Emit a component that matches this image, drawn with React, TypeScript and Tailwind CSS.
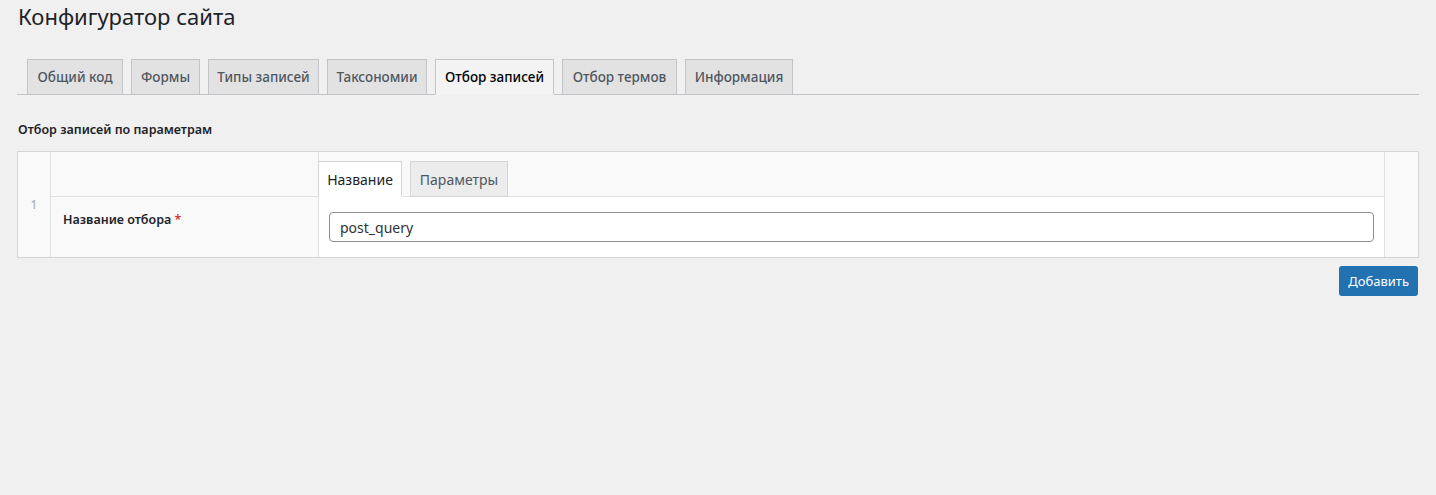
import { useState } from 'react';

const tabs = [
    { label: 'Общий код', w: 'w-[96px]' },
    { label: 'Формы', w: 'w-[69px]' },
    { label: 'Типы записей', w: 'w-[111px]' },
    { label: 'Таксономии', w: 'w-[100px]' },
    { label: 'Отбор записей', w: 'w-[119px]' },
    { label: 'Отбор термов', w: 'w-[115px]' },
    { label: 'Информация', w: 'w-[108px]' },
];

const fieldTabs = [
    { label: 'Название', w: 'w-[84px]' },
    { label: 'Параметры', w: 'w-[98px]' },
];

export default function App() {
    const [activeTab, setActiveTab] = useState(4);
    const [fieldTab, setFieldTab] = useState(0);
    const [name, setName] = useState('post_query');

    return (
        <div className="min-h-[495px] bg-[#f0f0f1] text-[#1d2327] font-['Segoe_UI','Noto_Sans','Open_Sans',sans-serif]">
            <div className="pl-[17px] pr-[17px]">
                <h1 className="pt-[2px] pl-[1px] text-[22px] leading-[29px] font-normal text-[#1d2327]">Конфигуратор сайта</h1>

                {/* Main tabs */}
                <nav className="mt-[28px] flex items-end gap-[8px] pl-[10px] border-b border-[#c3c4c7]">
                    {tabs.map((t, i) => (
                        <button
                            key={t.label}
                            onClick={() => setActiveTab(i)}
                            className={`${t.w} h-[36px] -mb-px flex items-center justify-center border border-[#c3c4c7] text-[13.5px] font-medium whitespace-nowrap ${
                                i === activeTab
                                    ? 'bg-[#f3f3f4] text-[#000000] border-b-[#f3f3f4]'
                                    : 'bg-[#e2e2e3] text-[#50575e]'
                            }`}
                        >
                            {t.label}
                        </button>
                    ))}
                </nav>

                <h2 className="mt-[26px] pl-[1px] text-[12.5px] leading-[18px] font-semibold text-[#1d2327]">Отбор записей по параметрам</h2>

                {/* Repeater table */}
                <div className="mt-[12px] grid grid-cols-[33px_268px_1fr_33px] border border-[#d5d5d7] bg-white">
                    <div className="row-span-2 bg-[#f9f9f9] border-r border-[#e1e1e1] flex items-center justify-center text-[12px] text-[#a0a5aa]">1</div>

                    <div className="h-[45px] bg-[#f9f9f9] border-r border-b border-[#e1e1e1]"></div>
                    <div className="h-[45px] bg-[#f9f9f9] border-r border-b border-[#e1e1e1] flex items-end gap-[8px] pt-[10px]">
                        {fieldTabs.map((t, i) => (
                            <button
                                key={t.label}
                                onClick={() => setFieldTab(i)}
                                className={`${t.w} h-[36px] -mb-px flex items-center justify-center border border-[#d5d5d7] text-[14px] font-normal ${
                                    i === fieldTab
                                        ? 'bg-white text-[#1d2327] border-b-white'
                                        : 'bg-[#ececed] text-[#50575e]'
                                } ${i === 0 ? '-ml-px' : ''}`}
                            >
                                {t.label}
                            </button>
                        ))}
                    </div>

                    <div className="row-span-2 bg-[#f9f9f9]"></div>

                    <div className="bg-[#f9f9f9] border-r border-[#e1e1e1] px-[12px] pt-[14px] text-[12.5px] leading-[18px] font-semibold text-[#1d2327]">
                        Название отбора <span className="text-[#d63638]">*</span>
                    </div>
                    <div className="border-r border-[#e1e1e1] px-[10px] py-[15px]">
                        <input
                            value={name}
                            onChange={(e) => setName(e.target.value)}
                            className="w-full h-[30px] rounded-[4px] border border-[#8c8f94] bg-white px-[10px] text-[14px] text-[#2c3338] outline-none"
                        />
                    </div>
                </div>

                <div className="flex justify-end mt-[8px] pr-px">
                    <button className="h-[30px] px-[9px] rounded-[3px] bg-[#2271b1] text-white text-[13px] leading-[28px]">Добавить</button>
                </div>
            </div>
        </div>
    );
}
